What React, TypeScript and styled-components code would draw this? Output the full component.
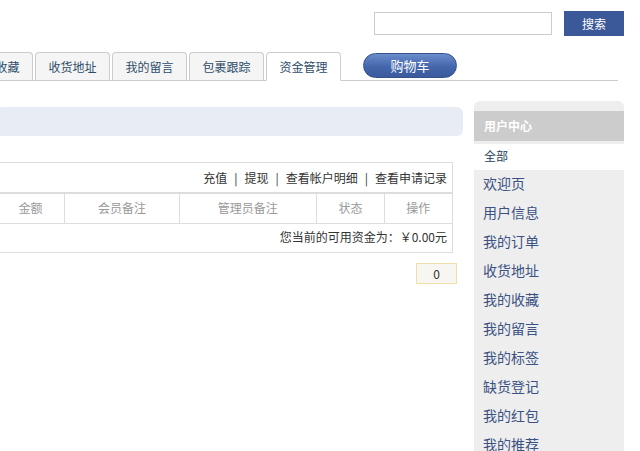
import React from "react";
import styled, { createGlobalStyle } from "styled-components";

const GlobalStyle = createGlobalStyle`
  html, body {
    margin: 0;
    padding: 0;
    background: #ffffff;
    overflow: hidden;
  }
  body {
    font-family: "Noto Sans CJK SC", "Liberation Sans", sans-serif;
    font-size: 12px;
    color: #333;
  }
`;

const Page = styled.div`
  width: 640px;
  height: 451px;
  overflow: hidden;
`;

const TopBar = styled.div`
  display: flex;
  justify-content: flex-end;
  align-items: center;
  gap: 12px;
  height: 47px;
  padding-right: 16px;
  box-sizing: border-box;
`;

const SearchInput = styled.input`
  width: 178px;
  height: 23px;
  box-sizing: border-box;
  border: 1px solid #cccccc;
  outline: none;
`;

const SearchButton = styled.button`
  width: 60px;
  height: 25px;
  border: none;
  background: #3b5998;
  color: #fff;
  font-family: inherit;
  font-size: 12px;
  padding: 0;
  cursor: pointer;
`;

/* the tab strip continues to the left of the visible area */
const TabBar = styled.div`
  display: flex;
  align-items: flex-end;
  gap: 2px;
  width: 660px;
  margin-left: -42px;
  height: 34px;
  box-sizing: border-box;
  border-bottom: 1px solid #cccccc;
`;

const Tab = styled.div<{ $active?: boolean }>`
  width: 75px;
  height: ${(p) => (p.$active ? 29 : 28)}px;
  box-sizing: border-box;
  border: 1px solid #cccccc;
  border-bottom: ${(p) => (p.$active ? "1px solid #fff" : "none")};
  margin-bottom: ${(p) => (p.$active ? -1 : 0)}px;
  border-radius: 4px 4px 0 0;
  background: ${(p) => (p.$active ? "#ffffff" : "#f5f5f5")};
  color: #2e4d6b;
  display: flex;
  align-items: center;
  justify-content: center;
  font-size: 12px;
`;

const CartButton = styled.div`
  width: 94px;
  height: 25px;
  margin-left: 20px;
  margin-bottom: 2px;
  box-sizing: border-box;
  border: 1px solid #35528c;
  border-radius: 13px;
  background: linear-gradient(#6a8ccc, #4467ac 55%, #3a5b9c);
  color: #fff;
  display: flex;
  align-items: center;
  justify-content: center;
  font-size: 13px;
`;

const Body = styled.div`
  display: flex;
  align-items: flex-start;
  gap: 11px;
  margin-top: 20px;
`;

const Main = styled.div`
  width: 467px;
  margin-left: -4px;
  display: flex;
  flex-direction: column;
`;

const InfoBar = styled.div`
  height: 29px;
  margin-top: 6px;
  background: #e8ecf4;
  border-radius: 6px;
`;

const Box = styled.div`
  margin-top: 26px;
  margin-right: 10px;
  border: 1px solid #dddddd;
`;

const LinkRow = styled.div`
  display: flex;
  justify-content: flex-end;
  align-items: center;
  height: 29px;
  padding: 0 5px 1px;
  box-sizing: border-box;
  color: #333;
`;

const LinkItem = styled.span`
  cursor: pointer;
`;

const Sep = styled.span`
  margin: 0 7px;
  color: #333;
`;

const Table = styled.table`
  width: 100%;
  border-collapse: collapse;
  border-top: 2px solid #dddddd;
`;

const Th = styled.th<{ $w: number }>`
  width: ${(p) => p.$w}px;
  height: 30px;
  box-sizing: border-box;
  padding: 0 0 1px;
  font-weight: normal;
  color: #999999;
  border-left: 1px solid #dddddd;
  border-bottom: 1px solid #dddddd;
  &:first-child {
    border-left: none;
  }
`;

const Td = styled.td`
  height: 29px;
  box-sizing: border-box;
  text-align: right;
  padding: 0 5px 2px;
  color: #333;
`;

const Pager = styled.div`
  display: flex;
  justify-content: flex-end;
  margin-top: 10px;
  margin-right: 6px;
`;

const PageBox = styled.div`
  width: 41px;
  height: 21px;
  box-sizing: border-box;
  border: 1px solid #f0dfa8;
  background: #f7f6f0;
  display: flex;
  align-items: center;
  justify-content: center;
  padding-bottom: 1px;
  color: #333;
`;

const Sidebar = styled.div`
  width: 150px;
  background: #eeeeee;
  border-radius: 6px 6px 0 0;
  padding-top: 10px;
`;

const SideTitle = styled.div`
  height: 30px;
  box-sizing: border-box;
  padding: 0 0 2px 10px;
  background: #cccccc;
  color: #fff;
  font-weight: bold;
  font-size: 12px;
  display: flex;
  align-items: center;
  margin-bottom: 3px;
`;

const SideAll = styled.div`
  height: 26px;
  box-sizing: border-box;
  padding: 0 0 3px 10px;
  background: #fff;
  color: #1f3f5f;
  display: flex;
  align-items: center;
  font-size: 12px;
`;

const SideItem = styled.div`
  height: 29px;
  box-sizing: border-box;
  padding: 0 0 3px 9px;
  display: flex;
  align-items: center;
  font-size: 14px;
  color: #3b5283;
`;

const tabs = ["我的收藏", "收货地址", "我的留言", "包裹跟踪", "资金管理"];
const columns: [string, number][] = [
  ["金额", 68],
  ["会员备注", 115],
  ["管理员备注", 138],
  ["状态", 68],
  ["操作", 68],
];
const sideItems = [
  "欢迎页",
  "用户信息",
  "我的订单",
  "收货地址",
  "我的收藏",
  "我的留言",
  "我的标签",
  "缺货登记",
  "我的红包",
  "我的推荐",
];
const links = ["充值", "提现", "查看帐户明细", "查看申请记录"];

export default function App() {
  return (
    <Page>
      <GlobalStyle />
      <TopBar>
        <SearchInput />
        <SearchButton>搜索</SearchButton>
      </TopBar>
      <TabBar>
        {tabs.map((t) => (
          <Tab key={t} $active={t === "资金管理"}>
            {t}
          </Tab>
        ))}
        <CartButton>购物车</CartButton>
      </TabBar>
      <Body>
        <Main>
          <InfoBar />
          <Box>
            <LinkRow>
              {links.map((l, i) => (
                <React.Fragment key={l}>
                  {i > 0 && <Sep>|</Sep>}
                  <LinkItem>{l}</LinkItem>
                </React.Fragment>
              ))}
            </LinkRow>
            <Table>
              <thead>
                <tr>
                  {columns.map(([c, w]) => (
                    <Th key={c} $w={w}>
                      {c}
                    </Th>
                  ))}
                </tr>
              </thead>
              <tbody>
                <tr>
                  <Td colSpan={columns.length}>您当前的可用资金为：￥0.00元</Td>
                </tr>
              </tbody>
            </Table>
          </Box>
          <Pager>
            <PageBox>0</PageBox>
          </Pager>
        </Main>
        <Sidebar>
          <SideTitle>用户中心</SideTitle>
          <SideAll>全部</SideAll>
          {sideItems.map((s) => (
            <SideItem key={s}>{s}</SideItem>
          ))}
        </Sidebar>
      </Body>
    </Page>
  );
}
